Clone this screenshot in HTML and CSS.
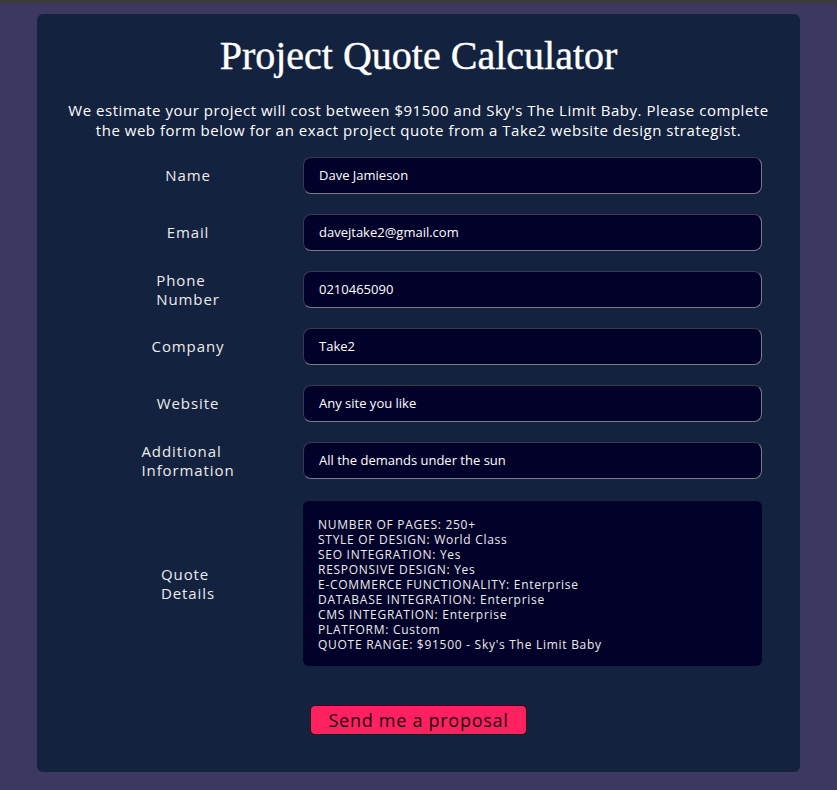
FILE: index.html
```html
<!DOCTYPE html>
<html lang="en">
<head>
<meta charset="utf-8">
<title>Project Quote Calculator</title>
<link rel="stylesheet" href="styles.css">
</head>
<body>
<div class="topbar"></div>
<main class="card">
  <h1 class="title">Project Quote Calculator</h1>
  <p class="intro">We estimate your project will cost between $91500 and Sky's The Limit Baby. Please complete the web form below for an exact project quote from a Take2 website design strategist.</p>
  <form class="form">
    <div class="row"><label class="label">Name</label><div class="field">Dave Jamieson</div></div>
    <div class="row"><label class="label">Email</label><div class="field">davejtake2@gmail.com</div></div>
    <div class="row"><label class="label">Phone Number</label><div class="field">0210465090</div></div>
    <div class="row"><label class="label">Company</label><div class="field">Take2</div></div>
    <div class="row"><label class="label">Website</label><div class="field">Any site you like</div></div>
    <div class="row"><label class="label">Additional Information</label><div class="field">All the demands under the sun</div></div>
    <div class="row row-area"><label class="label">Quote Details</label><div class="area">NUMBER OF PAGES: 250+<br>STYLE OF DESIGN: World Class<br>SEO INTEGRATION: Yes<br>RESPONSIVE DESIGN: Yes<br>E-COMMERCE FUNCTIONALITY: Enterprise<br>DATABASE INTEGRATION: Enterprise<br>CMS INTEGRATION: Enterprise<br>PLATFORM: Custom<br>QUOTE RANGE: $91500 - Sky's The Limit Baby</div></div>
    <div class="actions"><button type="button" class="btn">Send me a proposal</button></div>
  </form>
</main>
</body>
</html>
```
FILE: styles.css
```css
html, body {
  margin: 0;
  padding: 0;
}
body {
  background: #3d3860;
  font-family: "Open Sans", "Liberation Sans", sans-serif;
  color: #f2f2f2;
  height: 790px;
  overflow: hidden;
}
.topbar {
  height: 3px;
  background: #3b3b3b;
}
.card {
  margin: 11px 37px 0 37px;
  width: 763px;
  height: 758px;
  box-sizing: border-box;
  background: #13223f;
  border-radius: 6px;
  padding-top: 22px;
}
.title {
  margin: 0;
  text-align: center;
  font-family: "Liberation Serif", "DejaVu Serif", serif;
  font-weight: normal;
  font-size: 40px;
  line-height: 40px;
  color: #ffffff;
  -webkit-text-stroke: 0.4px #ffffff;
}
.intro {
  margin: 24px 0 0 0;
  padding: 0 20px;
  text-align: center;
  font-size: 15px;
  line-height: 20px;
  letter-spacing: 0.035em;
  color: #ffffff;
}
.form {
  margin: 17px 0 0 76px;
  width: 649px;
  display: flex;
  flex-direction: column;
  gap: 20px;
}
.row {
  display: grid;
  grid-template-columns: 150px 1fr;
  column-gap: 40px;
  align-items: center;
}
.label {
  justify-self: center;
  width: min-content;
  margin: -1px 0;
  font-size: 15px;
  line-height: 19px;
  letter-spacing: 0.06em;
  color: #ececec;
}
.field {
  height: 37px;
  box-sizing: border-box;
  background: #02012a;
  border: 1px solid;
  border-color: #3a3a4a #7a7a88 #7a7a88 #3a3a4a;
  border-radius: 8px;
  padding: 0 15px;
  font-size: 13px;
  line-height: 35px;
  color: #ffffff;
}
.row-area {
  margin-top: 2px;
}
.area {
  height: 165px;
  box-sizing: border-box;
  background: #02012a;
  border-radius: 6px;
  padding: 16px 15px;
  font-size: 12px;
  line-height: 15px;
  letter-spacing: 0.06em;
  color: #ececec;
}
.actions {
  display: flex;
  justify-content: center;
  margin-top: 19px;
  margin-left: -76px;
  width: 763px;
}
.btn {
  width: 217px;
  height: 30px;
  background: #ff2160;
  border: 1px solid #2a0a1a;
  border-radius: 5px;
  font-family: "Open Sans", "Liberation Sans", sans-serif;
  font-size: 18px;
  letter-spacing: 0.04em;
  color: #1a0812;
  padding: 0;
  cursor: pointer;
}
```
